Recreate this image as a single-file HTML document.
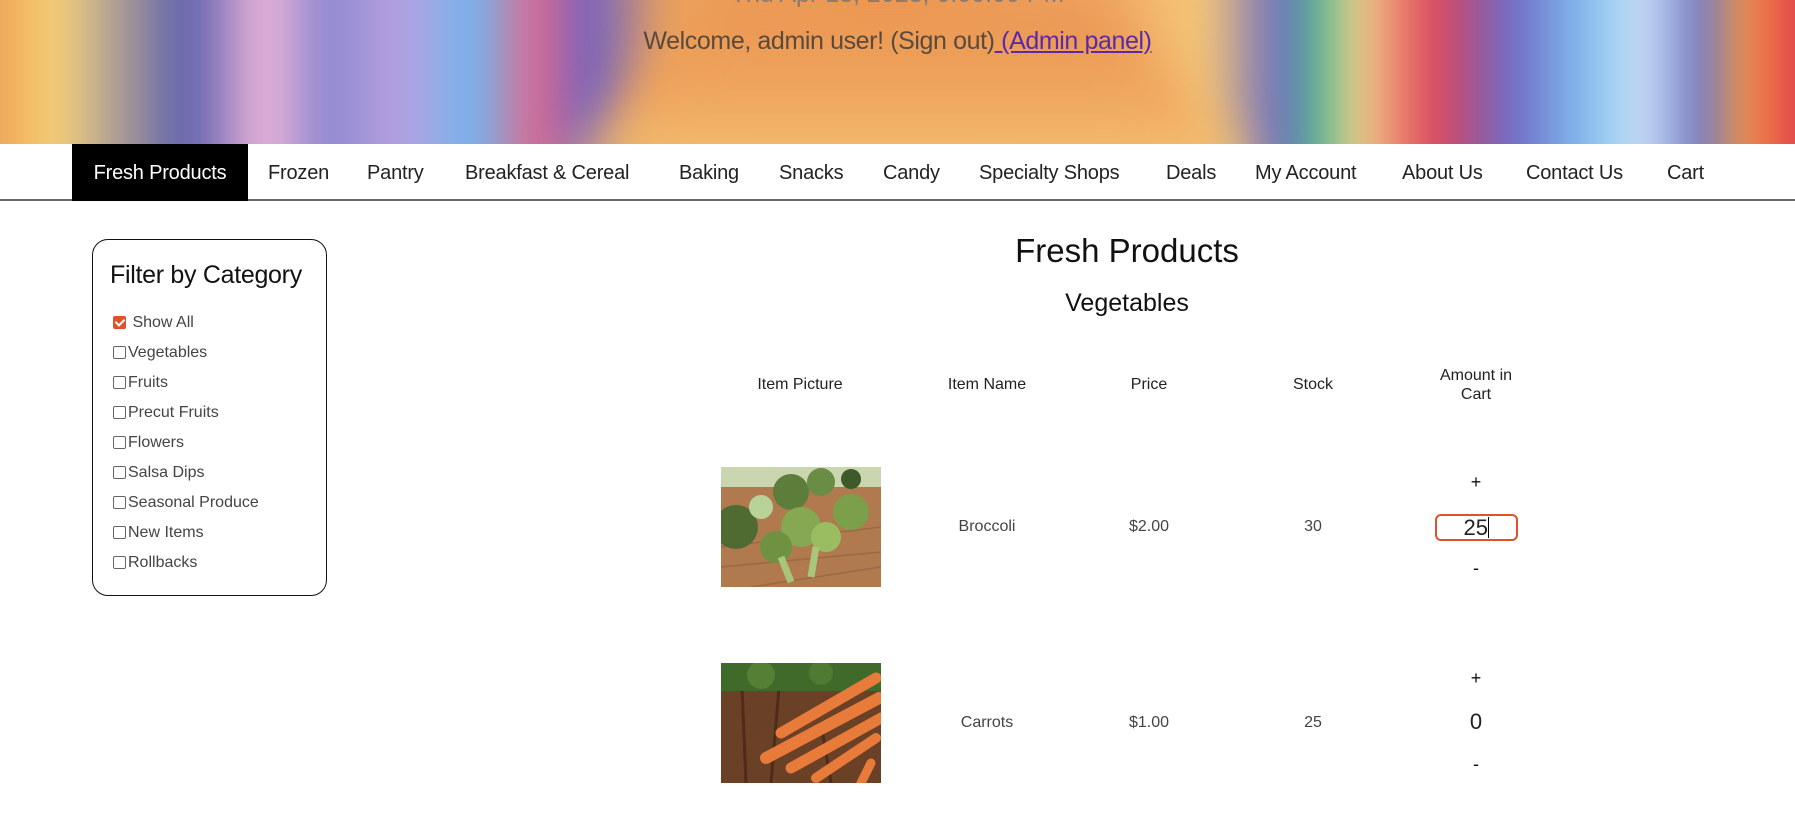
<!DOCTYPE html>
<html><head><meta charset="utf-8"><style>
*{margin:0;padding:0;box-sizing:border-box}
body{width:1795px;height:823px;overflow:hidden;background:#fff;font-family:"Liberation Sans",sans-serif;color:#111;position:relative}
#hdr{position:absolute;left:0;top:0;width:1795px;height:144px;overflow:hidden;background:#e9995a}
#hdr .bg{position:absolute;left:-60px;top:-60px;width:1915px;height:264px;filter:blur(18px);
background:linear-gradient(90deg,#a9b7c9 0%,#f2a24e 3%,#f6d37a 6%,#5b5fb0 13%,#f3b8d9 17%,#8a86cf 20%,#b9a1e0 24%,#70b5ee 28%,#e16a8c 31%,#6f62c2 34%,#eca35c 38%,#ee9a57 50%,#f0a865 60%,#f6c777 66%,#6b6cc4 70%,#4fbb8b 72%,#f2d28a 74%,#e0445a 78%,#6d6ac8 82%,#82c0ef 86%,#cfe2f6 89%,#6670c4 92%,#f09b4c 94%,#e53f45 97%,#b55a7a 100%)}
#hdr .fw{position:absolute;left:0;top:0;width:1795px;height:144px;filter:blur(25px)}
#hdr .floor{position:absolute;left:560px;top:0px;width:700px;height:180px;background:linear-gradient(180deg,#e9934f,#f0a860 60%,#f3c876);clip-path:polygon(22% 0,78% 0,100% 100%,0 100%)}
#hdr .top{position:absolute;left:0;width:1795px;text-align:center;top:-20px;font-size:25px;color:#8a7a70}
#hdr .wel{position:absolute;left:0;width:1795px;text-align:center;top:27px;font-size:25px;color:#5a4a3c;letter-spacing:-0.4px}
#hdr .wel a{color:#5b2aa6;text-decoration:underline}
#nav{position:absolute;top:144px;left:0;width:1795px;height:57px;border-bottom:2px solid #666;background:#fff}
#nav span{position:absolute;top:1px;height:56px;line-height:56px;font-size:20px;color:#222;white-space:nowrap;letter-spacing:-0.2px}
#nav span.act{background:#000;color:#fff;left:72px;width:176px;text-align:center;top:0;height:57px;line-height:58px}
#filter{position:absolute;left:92px;top:239px;width:235px;height:357px;border:1.5px solid #111;border-radius:16px}
#filter h3{position:absolute;left:17px;top:21px;font-size:25px;font-weight:normal;color:#111;white-space:nowrap;letter-spacing:-0.3px}
.cb{position:absolute;left:20px;font-size:16px;color:#444;white-space:nowrap}
.cb i{display:inline-block;width:13px;height:13px;border:1.5px solid #666;border-radius:2px;vertical-align:-2px;margin-right:2px}
.cb i.on{background:#e0522a;border-color:#e0522a;position:relative}
.cb i.on:after{content:"";position:absolute;left:3px;top:0px;width:4px;height:7px;border:solid #fff;border-width:0 2px 2px 0;transform:rotate(45deg)}
.c{position:absolute;text-align:center;transform:translateX(-50%);white-space:nowrap}
.h{font-size:16px;color:#222}
.v{font-size:16px;color:#444}
</style></head><body>
<div id="hdr"><div class="bg"></div><div class="fw"><div class="floor"></div></div>
<div class="top">Thu Apr 13, 2023, 0:00:00 PM</div>
<div class="wel">Welcome, admin user! (Sign out)<a> (Admin panel)</a></div></div>
<div id="nav">
<span class="act">Fresh Products</span>
<span style="left:268px">Frozen</span>
<span style="left:367px">Pantry</span>
<span style="left:465px">Breakfast &amp; Cereal</span>
<span style="left:679px">Baking</span>
<span style="left:779px">Snacks</span>
<span style="left:883px">Candy</span>
<span style="left:979px">Specialty Shops</span>
<span style="left:1166px">Deals</span>
<span style="left:1255px">My Account</span>
<span style="left:1402px">About Us</span>
<span style="left:1526px">Contact Us</span>
<span style="left:1667px">Cart</span>
</div>
<div id="filter"><h3>Filter by Category</h3>
<div class="cb" style="top:74px"><i class="on"></i> Show All</div>
<div class="cb" style="top:104px"><i></i>Vegetables</div>
<div class="cb" style="top:134px"><i></i>Fruits</div>
<div class="cb" style="top:164px"><i></i>Precut Fruits</div>
<div class="cb" style="top:194px"><i></i>Flowers</div>
<div class="cb" style="top:224px"><i></i>Salsa Dips</div>
<div class="cb" style="top:254px"><i></i>Seasonal Produce</div>
<div class="cb" style="top:284px"><i></i>New Items</div>
<div class="cb" style="top:314px"><i></i>Rollbacks</div>
</div>
<div class="c" style="left:1127px;top:232px;font-size:33px;color:#111">Fresh Products</div>
<div class="c" style="left:1127px;top:289px;font-size:25px;color:#111">Vegetables</div>
<div class="c h" style="left:800px;top:376px">Item Picture</div>
<div class="c h" style="left:987px;top:376px">Item Name</div>
<div class="c h" style="left:1149px;top:376px">Price</div>
<div class="c h" style="left:1313px;top:376px">Stock</div>
<div class="c h" style="left:1476px;top:366px;line-height:19px">Amount in<br>Cart</div>

<svg style="position:absolute;left:721px;top:467px" width="160" height="120" viewBox="0 0 160 120">
<rect width="160" height="120" fill="#b07a4e"/>
<path d="M0 80 L160 60 M0 100 L160 85 M30 120 L160 100" stroke="#9a6a42" stroke-width="1.5"/>
<rect x="0" y="0" width="160" height="20" fill="#c9d6b0"/>
<circle cx="15" cy="60" r="22" fill="#4f6b32"/><circle cx="70" cy="25" r="18" fill="#5d7d3b"/>
<circle cx="100" cy="15" r="14" fill="#6a8c44"/><circle cx="130" cy="45" r="18" fill="#7c9f4b"/>
<circle cx="80" cy="60" r="20" fill="#87a853"/><circle cx="55" cy="80" r="16" fill="#6f9242"/>
<circle cx="105" cy="70" r="15" fill="#9bbd62"/><circle cx="40" cy="40" r="12" fill="#b8d397"/>
<circle cx="130" cy="12" r="10" fill="#3f5a2a"/>
<path d="M60 90 L70 115 M95 80 L90 110" stroke="#a9c579" stroke-width="7"/>
</svg>
<div class="c v" style="left:987px;top:518px">Broccoli</div>
<div class="c v" style="left:1149px;top:518px">$2.00</div>
<div class="c v" style="left:1313px;top:518px">30</div>
<div class="c" style="left:1476px;top:472px;font-size:18px">+</div>
<div style="position:absolute;left:1435px;top:514px;width:83px;height:27px;border:2px solid #e0522a;border-radius:6px;text-align:center;font-size:22px;line-height:23px;color:#222">25<span style="display:inline-block;width:1.5px;height:21px;background:#000;vertical-align:-3px"></span></div>
<div class="c" style="left:1476px;top:558px;font-size:18px">-</div>

<svg style="position:absolute;left:721px;top:663px" width="160" height="120" viewBox="0 0 160 120">
<rect width="160" height="120" fill="#6a4027"/>
<path d="M20 0 L25 120 M60 0 L50 120 M100 60 L110 120" stroke="#4e2c19" stroke-width="3"/>
<rect x="0" y="0" width="160" height="28" fill="#3f6a2a"/>
<circle cx="40" cy="12" r="14" fill="#557f35"/><circle cx="100" cy="10" r="12" fill="#4f7a31"/>
<g stroke="#e87a3a" stroke-linecap="round">
<path d="M155 15 L60 70" stroke-width="11"/><path d="M158 35 L45 95" stroke-width="12"/>
<path d="M160 55 L70 105" stroke-width="11"/><path d="M155 75 L95 115" stroke-width="10"/>
<path d="M150 100 L140 120" stroke-width="9"/></g>
</svg>
<div class="c v" style="left:987px;top:714px">Carrots</div>
<div class="c v" style="left:1149px;top:714px">$1.00</div>
<div class="c v" style="left:1313px;top:714px">25</div>
<div class="c" style="left:1476px;top:668px;font-size:18px">+</div>
<div class="c" style="left:1476px;top:709px;font-size:22px;color:#222">0</div>
<div class="c" style="left:1476px;top:754px;font-size:18px">-</div>
</body></html>
